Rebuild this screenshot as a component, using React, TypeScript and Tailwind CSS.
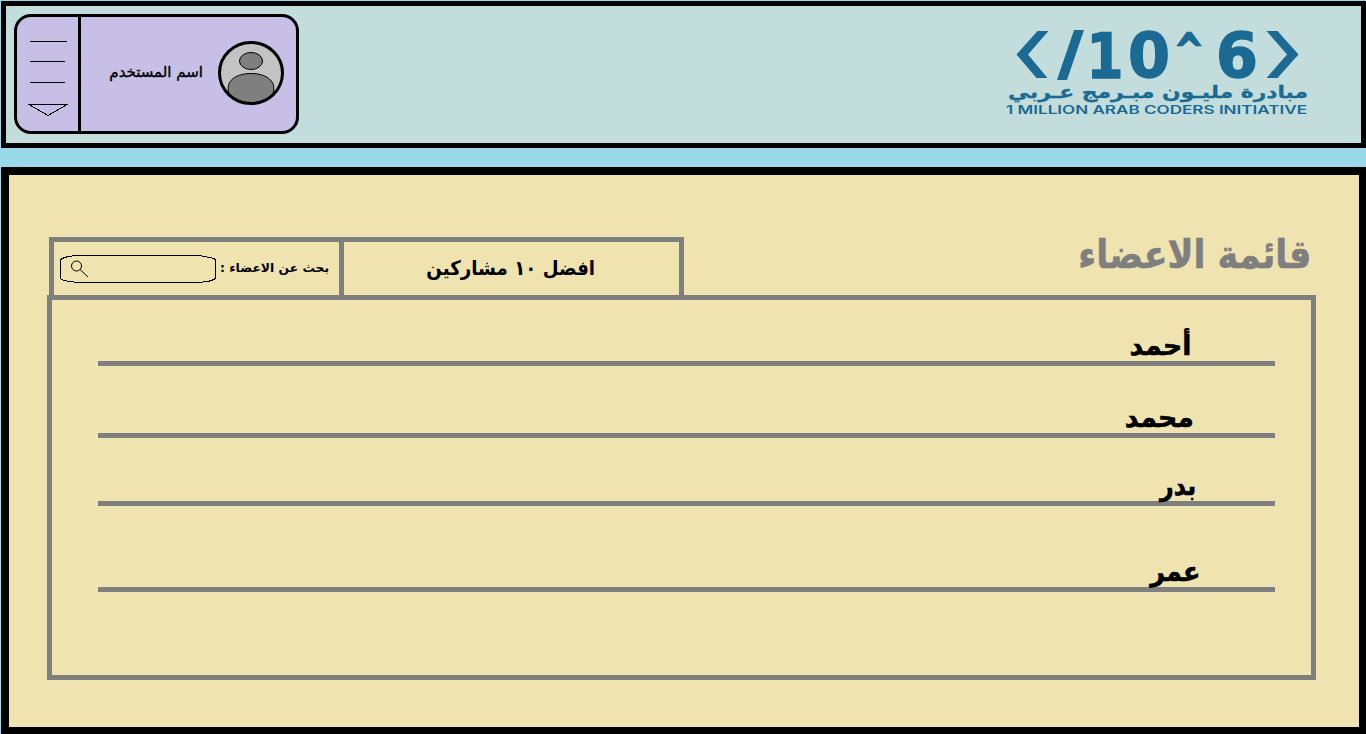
import React from 'react';

const FONT = "font-['DejaVu_Sans',sans-serif]";

function UserCard() {
  return (
    <section className="flex h-[120px] w-[285px] overflow-hidden rounded-[17px] border-[3px] border-black bg-[#c8bfe7]">
      <button className="flex w-[64px] shrink-0 border-r-[3px] border-black" aria-label="القائمة">
        <svg width="61" height="114" viewBox="0 0 61 114" fill="none" stroke="#000" shapeRendering="crispEdges">
          <path d="M13 24.5H50M13 44.5H48M13 65.5H48M12 87.5H50L31 98.5Z" />
        </svg>
      </button>
      <div className="flex flex-1 items-center justify-end pb-[2px] pr-[12px]">
        <span dir="rtl" className="mb-px mr-[15px] whitespace-nowrap text-[15px] leading-none [-webkit-text-stroke:0.4px_#000]">
          اسم المستخدم
        </span>
        <svg width="66" height="64" viewBox="0 0 66 64" className="shrink-0">
          <ellipse cx="33" cy="32" rx="31.5" ry="30.5" fill="#c3c3c3" />
          <ellipse cx="33" cy="20" rx="11.5" ry="8.5" fill="#7f7f7f" stroke="#000" />
          <path d="M11.5 54C6 40 18 32.5 33 32.5S60 40 54.5 54Q45 61.5 33 62Q20 61.5 11.5 54Z" fill="#7f7f7f" stroke="#000" />
          <ellipse cx="33" cy="32" rx="31.5" ry="30.5" fill="none" stroke="#000" strokeWidth="3" />
        </svg>
      </div>
    </section>
  );
}

function Logo() {
  return (
    <svg width="310" height="112" viewBox="1000 14 310 112" fill="#1b6a93">
      <path d="M1037.5 31H1048.5L1028 54.5L1047.5 78H1036.5L1016.5 54.5Z" />
      <path d="M1074 30H1084L1067 80H1057Z" />
      <path d="M1266.5 31H1277.5L1298.5 54.5L1277.5 78H1266.5L1287 54.5Z" />
      <g fontFamily="DejaVu Sans, sans-serif" fontWeight="700" fontSize="62" stroke="#1b6a93" strokeWidth="1.5">
        <text x="1086.5" y="77.5" textLength="37" lengthAdjust="spacingAndGlyphs">1</text>
        <text x="1128" y="77" textLength="42" lengthAdjust="spacingAndGlyphs">0</text>
        <text x="1216" y="77" textLength="42" lengthAdjust="spacingAndGlyphs">6</text>
        <text x="1175" y="65" fontSize="45" strokeWidth="2.5" textLength="28" lengthAdjust="spacingAndGlyphs">^</text>
      </g>
      <text x="1308" y="97.5" direction="rtl" fontFamily="DejaVu Sans, sans-serif" fontWeight="700" fontSize="17" stroke="#1b6a93" strokeWidth="0.3" textLength="300" lengthAdjust="spacingAndGlyphs">
        مبادرة مليـون مبـرمج عـربي
      </text>
      <text x="1006" y="114" fontFamily="Inter, sans-serif" fontWeight="600" fontSize="11.5" textLength="301" lengthAdjust="spacingAndGlyphs">
        1 MILLION ARAB CODERS INITIATIVE
      </text>
    </svg>
  );
}

const members = [
  { name: 'أحمد', row: 'h-[66px] pr-[84px]', text: 'scale-x-[0.99]' },
  { name: 'محمد', row: 'h-[72px] pr-[81px]', text: 'scale-x-[0.99]' },
  { name: 'بدر', row: 'h-[68px] pr-[79px]', text: 'scale-x-[0.88]' },
  { name: 'عمر', row: 'h-[86px] pr-[75px]', text: 'scale-x-[0.94]' },
];

export default function App() {
  return (
    <div className={`flex h-[734px] w-[1366px] flex-col overflow-hidden bg-[#99d9ea] pl-px pt-px text-black ${FONT}`}>
      <header className="flex h-[147px] shrink-0 items-start justify-between border-[5px] border-black bg-[#c3dddc] pl-[8px] pr-[51px] pt-[8px]">
        <UserCard />
        <Logo />
      </header>
      <main className="mt-[19px] flex h-[567px] shrink-0 flex-col border-b-[7px] border-l-[8px] border-r-[7px] border-t-[8px] border-black bg-[#efe4b0] pl-[38px] pr-[43px] pt-[62px]">
        <div className="flex h-[58px] shrink-0 justify-between pl-[2px]">
          <div className="flex h-[58px] w-[635px] border-x-[5px] border-t-[5px] border-[#7f7f7f]">
            <label className="flex w-[290px] items-start border-r-[5px] border-[#7f7f7f] pl-[6px] pt-[13px]">
              <svg width="156" height="28" viewBox="0 0 156 28" fill="none" stroke="#000" className="shrink-0">
                <path
                  d="M.5 5V23L1.5 24.5L9 26.5L18 27.5H138L148 26.5L154 24.5L155.5 23V5L154 3.5L145 1.5L139 .5H16L8 1.5L2 3.5Z"
                  shapeRendering="crispEdges"
                />
                <circle cx="16.5" cy="11" r="5" />
                <path d="M20 14.5L28 22" />
              </svg>
              <span dir="rtl" className="ml-[4px] mt-[7px] origin-left scale-x-[1.03] whitespace-nowrap text-[12px] font-bold leading-none">
                بحث عن الاعضاء :
              </span>
            </label>
            <div className="flex flex-1 items-center justify-center pb-[2px]">
              <span dir="rtl" className="mr-[2px] scale-x-[0.91] whitespace-nowrap text-[20px] font-bold leading-none">
                افضل ١٠ مشاركين
              </span>
            </div>
          </div>
          <h1 dir="rtl" className="mr-[5px] origin-right scale-x-[0.895] whitespace-nowrap text-[39px] font-bold leading-[35px] text-[#7f7f7f] [-webkit-text-stroke:0.6px_#7f7f7f]">
            قائمة الاعضاء
          </h1>
        </div>
        <ul className="h-[385px] w-[1269px] shrink-0 border-[5px] border-[#7f7f7f] pl-[46px] pr-[36px]">
          {members.map((m) => (
            <li key={m.name} className={`flex items-end justify-end border-b-[5px] border-[#7f7f7f] ${m.row}`}>
              <span dir="rtl" className={`origin-right text-[27px] font-bold leading-[30px] [-webkit-text-stroke:0.6px_#000] ${m.text}`}>
                {m.name}
              </span>
            </li>
          ))}
        </ul>
      </main>
    </div>
  );
}
